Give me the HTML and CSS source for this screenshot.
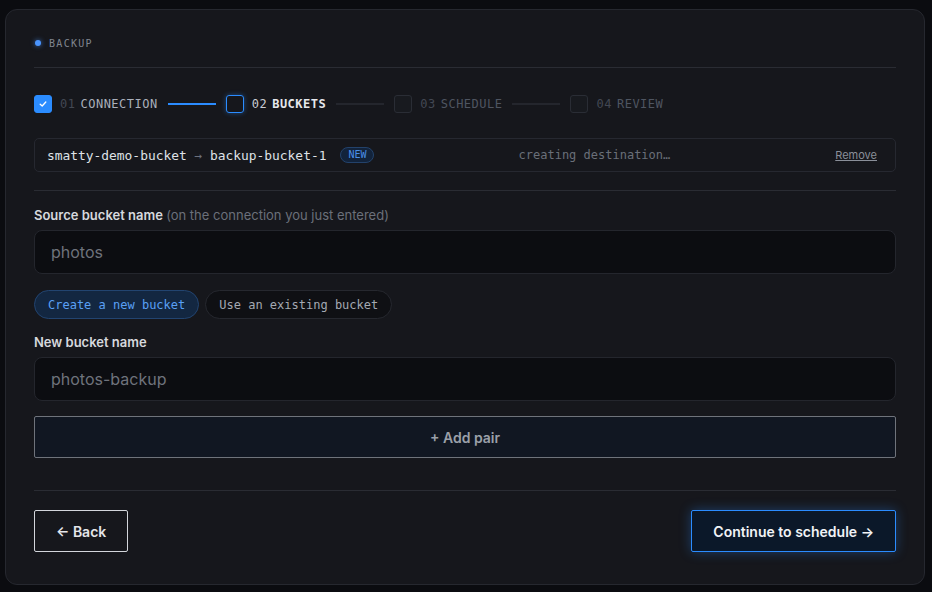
FILE: index.html
```html
<!DOCTYPE html>
<html>
  <head>
    <title>Backup</title>
    <link rel="stylesheet" href="styles.css">
  </head>
  <body>
    <div class="card">

      <div class="card-head">
        <span class="dot"></span>
        <span class="eyebrow">BACKUP</span>
      </div>

      <div class="stepper">
        <div class="step done">
          <span class="box">
            <svg width="8" height="8" viewBox="0 0 8 8"><path d="M1.2 4.2 L3.2 6 L6.8 2" fill="none" stroke="#fff" stroke-width="1.3" stroke-linecap="round" stroke-linejoin="round"/></svg>
          </span>
          <span class="num">01</span><span class="name">CONNECTION</span>
        </div>
        <span class="line on"></span>
        <div class="step current">
          <span class="box"></span>
          <span class="num">02</span><span class="name">BUCKETS</span>
        </div>
        <span class="line"></span>
        <div class="step">
          <span class="box"></span>
          <span class="num">03</span><span class="name">SCHEDULE</span>
        </div>
        <span class="line"></span>
        <div class="step">
          <span class="box"></span>
          <span class="num">04</span><span class="name">REVIEW</span>
        </div>
      </div>

      <div class="pair-row">
        <span class="pair-name">smatty-demo-bucket <span class="arrow">→</span> backup-bucket-1</span>
        <span class="badge">NEW</span>
        <span class="status">creating destination…</span>
        <a class="remove" href="#">Remove</a>
      </div>

      <div class="form">
        <label class="label">Source bucket name <span class="hint">(on the connection you just entered)</span></label>
        <div class="input">photos</div>

        <div class="toggle">
          <span class="pill active">Create a new bucket</span>
          <span class="pill">Use an existing bucket</span>
        </div>

        <label class="label">New bucket name</label>
        <div class="input">photos-backup</div>

        <button class="add-pair">+ Add pair</button>
      </div>

      <div class="actions">
        <button class="btn">← Back</button>
        <button class="btn primary">Continue to schedule →</button>
      </div>

    </div>
  </body>
</html>
```

FILE: styles.css
```css
html, body {
  margin: 0;
  background: #0b0c10;
}
body {
  padding: 9px 7px 0 5px;
  font-family: Inter, "Noto Sans", sans-serif;
  color: #e4e6eb;
}
.card {
  background: #16171c;
  border: 1px solid #26282f;
  border-radius: 12px;
  padding: 26px 28px 32px;
  height: 576px;
  box-sizing: border-box;
}
.card-head {
  display: flex;
  align-items: center;
  gap: 8px;
  padding-bottom: 17px;
  border-bottom: 1px solid #2a2c33;
  height: 14px;
}
.dot {
  width: 6px;
  height: 6px;
  border-radius: 50%;
  background: #4a95ff;
  box-shadow: 0 0 5px rgba(74,149,255,0.7);
  margin-left: 1px;
}
.eyebrow {
  font-family: "DejaVu Sans Mono", monospace;
  font-size: 10px;
  letter-spacing: 1.3px;
  color: #80858f;
}

.stepper {
  display: flex;
  align-items: center;
  margin-top: 27px;
  height: 18px;
}
.step {
  display: flex;
  align-items: center;
  font-family: "DejaVu Sans Mono", monospace;
  font-size: 12px;
  letter-spacing: 0.5px;
}
.box {
  width: 16px;
  height: 16px;
  border: 1px solid #2a2d35;
  border-radius: 3px;
  background: #181a1f;
  display: flex;
  align-items: center;
  justify-content: center;
  margin-right: 8px;
}
.step.done .box {
  background: #2b8cff;
  border-color: #2b8cff;
}
.step.current .box {
  background: transparent;
  border-color: #2b8cff;
  box-shadow: 0 0 5px rgba(43,140,255,0.45);
}
.num {
  color: #434853;
  margin-right: 5px;
}
.name {
  color: #4f5561;
}
.step.done .name { color: #aab0bb; }
.step.current .num { color: #c9ccd3; }
.step.current .name { color: #e6e8ec; font-weight: bold; }
.line {
  width: 48px;
  height: 2px;
  background: #24262d;
  margin: 0 10px;
}
.line.on { background: #2b8cff; }

.pair-row {
  display: flex;
  align-items: center;
  margin-top: 25px;
  height: 34px;
  box-sizing: border-box;
  border: 1px solid #262830;
  border-radius: 5px;
  padding: 0 18px 0 12px;
  font-family: "DejaVu Sans Mono", monospace;
}
.pair-name {
  font-size: 12.9px;
  color: #dfe2e7;
}
.arrow { color: #6c717c; }
.badge {
  margin-left: 14px;
  font-size: 10px;
  color: #4a8fe8;
  background: #12233b;
  border: 1px solid #23426b;
  border-radius: 8px;
  padding: 1px 7px;
  line-height: 12px;
}
.status {
  margin-left: auto;
  font-size: 12px;
  color: #6a6f79;
  margin-right: 165px;
}
.remove {
  font-family: Inter, sans-serif;
  font-size: 11px;
  color: #8a8f99;
}

.form {
  margin-top: 18px;
  border-top: 1px solid #2a2c33;
  padding-top: 16px;
  display: flex;
  flex-direction: column;
}
.label {
  font-size: 13px;
  font-weight: 600;
  color: #d6d9de;
  line-height: 16px;
  margin-bottom: 7px;
}
.hint {
  font-weight: 400;
  color: #6b707a;
}
.input {
  height: 44px;
  box-sizing: border-box;
  background: #0c0d11;
  border: 1px solid #24262d;
  border-radius: 8px;
  padding: 0 16px;
  display: flex;
  align-items: center;
  font-size: 16px;
  color: #6f737c;
}
.toggle {
  display: flex;
  gap: 6px;
  margin: 16px 0 15px;
}
.pill {
  height: 29px;
  box-sizing: border-box;
  border: 1px solid #26282f;
  border-radius: 15px;
  padding: 0 13px;
  display: flex;
  align-items: center;
  font-family: "DejaVu Sans Mono", monospace;
  font-size: 12px;
  color: #a4a9b2;
  background: #0f1014;
}
.pill.active {
  background: #132741;
  border-color: #224470;
  color: #5aa0f5;
}
.form .input + .add-pair { margin-top: 15px; }
.add-pair {
  height: 42px;
  background: #111722;
  border: 1px solid #6f737b;
  border-radius: 2px;
  font-family: Inter, sans-serif;
  font-size: 14px;
  font-weight: 600;
  color: #9ba0a9;
}

.actions {
  margin-top: 32px;
  border-top: 1px solid #2a2c33;
  padding-top: 19px;
  display: flex;
  justify-content: space-between;
}
.btn {
  height: 42px;
  padding: 0 21px;
  background: transparent;
  border: 1px solid #d3d6db;
  border-radius: 2px;
  font-family: Inter, sans-serif;
  font-size: 14px;
  font-weight: 600;
  color: #e4e6ea;
}
.btn.primary {
  background: #0b1829;
  border-color: #2b8cff;
  color: #f1f3f6;
  box-shadow: 0 0 12px rgba(43,140,255,0.35);
}
```
